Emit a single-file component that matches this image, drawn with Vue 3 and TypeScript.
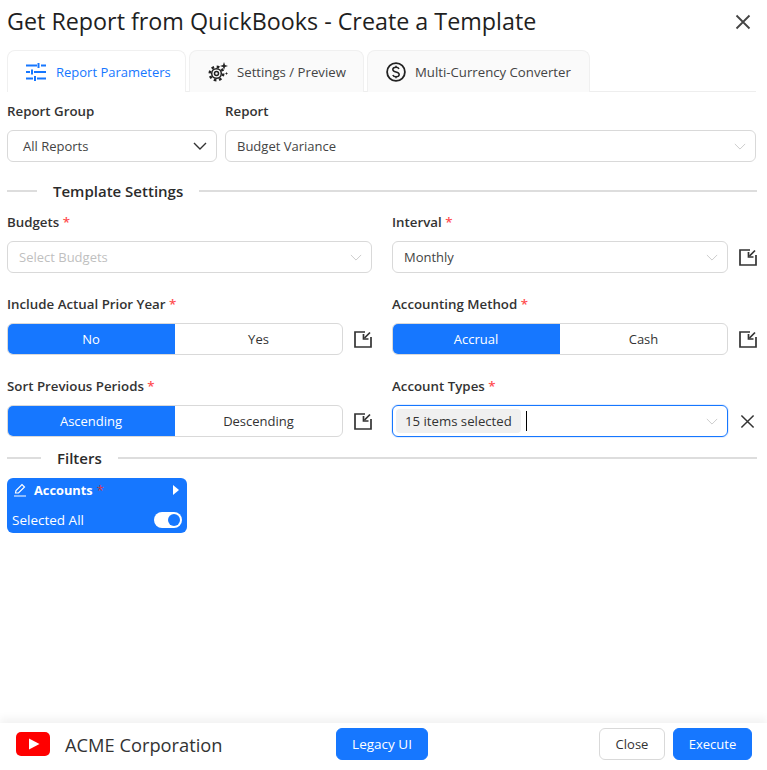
<template>
    <div class="dialog">
        <div class="body">
            <div class="title-row">
                <h1 class="title">Get Report from QuickBooks - Create a Template</h1>
                <svg class="close" viewBox="0 0 16 16"><path d="M1.500 1.500 14.500 14.500M14.500 1.500 1.500 14.500" /></svg>
            </div>

            <div class="tabs">
                <div class="tab active tab-1">
                    <svg class="tab-icon" viewBox="0 0 20 20">
                        <path d="M0 3.500H11M15 3.500H20M12.500 1V6M0 10H4M8 10H20M6 7.500V12.500M0 16.500H7M11 16.500H20M9 14V19" />
                    </svg>
                    <span>Report Parameters</span>
                </div>
                <div class="tab tab-2">
                    <svg class="tab-icon dark" viewBox="0 0 20 20">
                        <circle cx="8.500" cy="11.500" r="2" stroke-width="1.500" />
                        <circle cx="8.500" cy="11.500" r="4.800" stroke-width="1.500" />
                        <circle cx="8.500" cy="11.500" r="6.800" stroke-width="2.400" stroke-dasharray="2.700 2.640" />
                        <path class="spark" d="M16 0 17 3 20 4 17 5 16 8 15 5 12 4 15 3Z" />
                        <path class="spark" d="M18.500 10 19 11 20 11.500 19 12 18.500 13 18 12 17 11.500 18 11Z" />
                    </svg>
                    <span>Settings / Preview</span>
                </div>
                <div class="tab tab-3">
                    <svg class="tab-icon dark" viewBox="0 0 20 20">
                        <circle cx="10" cy="10" r="8.900" stroke-width="1.800" />
                        <path d="M13 7C12.500 5.800 11.300 5.200 10 5.200 8 5.200 6.800 6.200 6.800 7.500 6.800 11 13.200 9 13.200 12.500 13.200 13.900 12 14.800 10 14.800 8.500 14.800 7.300 14.200 6.800 13M10 3.700V5.200M10 14.800V16.300" stroke-width="1.500" />
                    </svg>
                    <span>Multi-Currency Converter</span>
                </div>
            </div>

            <div class="report-row">
                <div class="field">
                    <label class="label">Report Group</label>
                    <div class="select">
                        <span class="value">All Reports</span>
                        <svg class="chevron dark" viewBox="0 0 14 8"><path d="M1 1 7 7 13 1" /></svg>
                    </div>
                </div>
                <div class="field">
                    <label class="label">Report</label>
                    <div class="select narrow">
                        <span class="value">Budget Variance</span>
                        <svg class="chevron" viewBox="0 0 14 8"><path d="M1 1 7 7 13 1" /></svg>
                    </div>
                </div>
            </div>

            <div class="divider settings-divider">
                <span class="line line-settings"></span>
                <span class="divider-text">Template Settings</span>
                <span class="line grow"></span>
            </div>

            <div class="form-grid">
                <div class="field" v-for="item in fields" :key="item.label">
                    <label class="label">{{ item.label }} <span class="req">*</span></label>
                    <div class="control-row">
                        <div v-if="item.options" class="toggle">
                            <div class="opt on">{{ item.options[0] }}</div>
                            <div class="opt">{{ item.options[1] }}</div>
                        </div>
                        <div v-else-if="item.chip" class="select narrow focused">
                            <span class="chip">{{ item.chip }}</span>
                            <span class="caret"></span>
                            <svg class="chevron" viewBox="0 0 14 8"><path d="M1 1 7 7 13 1" /></svg>
                        </div>
                        <div v-else class="select narrow">
                            <span class="value" :class="{ placeholder: item.placeholder }">{{ item.placeholder || item.value }}</span>
                            <svg class="chevron" viewBox="0 0 14 8"><path d="M1 1 7 7 13 1" /></svg>
                        </div>
                        <svg v-if="item.chip" class="clear" viewBox="0 0 16 16"><path d="M1.500 1.500 14.500 14.500M14.500 1.500 1.500 14.500" /></svg>
                        <svg v-else-if="item.action" class="action" viewBox="0 0 18 18">
                            <path d="M11 2H1V17H17V7" />
                            <path d="M16 2.500 10.500 8" />
                            <path d="M9.500 4V9H14.500" />
                        </svg>
                    </div>
                </div>
            </div>

            <div class="divider filters-divider">
                <span class="line line-filters"></span>
                <span class="divider-text">Filters</span>
                <span class="line grow"></span>
            </div>

            <div class="filter-card">
                <div class="filter-head">
                    <svg class="pen" viewBox="0 0 14 14">
                        <path d="M1 13H13M2.500 10 3 7.500 9 1.500 11.500 4 5.500 10Z" />
                    </svg>
                    <span class="filter-name">Accounts</span>
                    <span class="req dark-req">*</span>
                    <span class="arrow"></span>
                </div>
                <div class="filter-foot">
                    <span>Selected All</span>
                    <span class="switch"><span class="knob"></span></span>
                </div>
            </div>
        </div>

        <div class="footer">
            <div class="brand">
                <svg class="logo" viewBox="0 0 34 24">
                    <rect width="34" height="24" rx="5" fill="#ff0000" />
                    <path d="M13 6.500 23.500 12 13 17.500Z" fill="#ffffff" />
                </svg>
                <span class="company">ACME Corporation</span>
            </div>
            <button class="btn primary legacy">Legacy UI</button>
            <div class="actions">
                <button class="btn plain">Close</button>
                <button class="btn primary">Execute</button>
            </div>
        </div>
    </div>
</template>

<script setup lang="ts">
    // 表单字段配置
    interface Ifield {
        label: string;
        value?: string;
        placeholder?: string;
        options?: [string, string];
        chip?: string;
        action?: boolean;
    }

    const fields: Array<Ifield> = [
        { label: 'Budgets', placeholder: 'Select Budgets' },
        { label: 'Interval', value: 'Monthly', action: true },
        { label: 'Include Actual Prior Year', options: ['No', 'Yes'], action: true },
        { label: 'Accounting Method', options: ['Accrual', 'Cash'], action: true },
        { label: 'Sort Previous Periods', options: ['Ascending', 'Descending'], action: true },
        { label: 'Account Types', chip: '15 items selected' }
    ]
</script>

<style>
    html, body {
        margin: 0;
        background-color: #ffffff;
    }
</style>

<style scoped>
    .dialog {
        width: 767px;
        height: 770px;
        display: flex;
        flex-direction: column;
        overflow: hidden;
        font-family: "Open Sans", "Noto Sans", sans-serif;
        font-size: 13px;
        color: #333333;
        background-color: #ffffff;
    }
    .body {
        flex: 1;
        padding: 0 10px 0 7px;
    }
    .title-row {
        height: 50px;
        display: flex;
        align-items: center;
        justify-content: space-between;
        padding-bottom: 6px;
        box-sizing: border-box;
    }
    .title {
        margin: 0;
        font-family: "Open Sans", sans-serif;
        font-size: 23.300px;
        font-weight: 400;
        color: #1f1f1f;
        margin-top: -2px;
    }
    .close {
        width: 16px;
        height: 16px;
        margin-right: 6px;
        fill: none;
        stroke: #444444;
        stroke-width: 1.800;
    }
    .tabs {
        height: 42px;
        width: 749px;
        display: flex;
        gap: 3px;
        box-sizing: border-box;
        border-bottom: 1px solid #eeeeee;
    }
    .tab {
        height: 42px;
        box-sizing: border-box;
        display: flex;
        align-items: center;
        border: 1px solid #f0f0f0;
        border-bottom: 0;
        border-radius: 8px 8px 0 0;
        background-color: #fafafa;
        color: #444444;
        font-size: 13.200px;
    }
    .tab.active {
        background-color: #ffffff;
        color: #1677ff;
        font-size: 13px;
    }
    .tab-1 {
        width: 179px;
        padding-left: 18px;
        gap: 10px;
    }
    .tab-2 {
        width: 175px;
        padding-left: 18px;
        gap: 9px;
    }
    .tab-3 {
        width: 223px;
        padding-left: 18px;
        gap: 9px;
    }
    .tab-icon {
        width: 20px;
        height: 20px;
        flex-shrink: 0;
        fill: none;
        stroke: #1677ff;
        stroke-width: 2;
    }
    .tab-icon.dark {
        stroke: #222222;
    }
    .spark {
        fill: #222222;
        stroke: none;
    }
    .report-row {
        display: grid;
        grid-template-columns: 210px 531px;
        gap: 8px;
        width: 749px;
        margin-top: 10px;
    }
    .field {
        display: flex;
        flex-direction: column;
        min-width: 0;
    }
    .label {
        height: 19px;
        margin-bottom: 9px;
        line-height: 19px;
        font-size: 13.300px;
        font-weight: 600;
        color: #333333;
        white-space: nowrap;
    }
    .req {
        color: #ff4d4f;
    }
    .select {
        height: 32px;
        flex: 0 0 32px;
        min-width: 0;
        box-sizing: border-box;
        display: flex;
        align-items: center;
        padding: 0 9px 0 15px;
        border: 1px solid #d9d9d9;
        border-radius: 6px;
        background-color: #ffffff;
    }
    .control-row .select {
        flex: 1;
    }
    .select.narrow {
        padding-left: 11px;
    }
    .select.focused {
        padding-left: 3px;
        border-color: #1677ff;
        box-shadow: 0 0 0 1px rgba(22, 119, 255, 0.12);
    }
    .value {
        flex: 1;
        color: #444444;
    }
    .placeholder {
        color: #bfbfbf;
    }
    .chevron {
        width: 12px;
        height: 7px;
        flex-shrink: 0;
        margin-left: auto;
        fill: none;
        stroke: #c4c4c4;
        stroke-width: 1;
    }
    .chevron.dark {
        width: 14px;
        height: 8px;
        stroke: #333333;
        stroke-width: 1.400;
    }
    .chip {
        height: 24px;
        line-height: 24px;
        padding: 0 9px;
        border-radius: 4px;
        background-color: #f0f0f0;
        color: #333333;
        white-space: nowrap;
        font-size: 13.200px;
    }
    .caret {
        width: 1px;
        height: 20px;
        margin-left: 5px;
        background-color: #000000;
    }
    .divider {
        display: flex;
        align-items: center;
        width: 750px;
        font-size: 15px;
        font-weight: 600;
        color: #2b2b2b;
    }
    .settings-divider {
        margin-top: 19px;
        height: 20px;
    }
    .filters-divider {
        margin-top: 11px;
        height: 20px;
    }
    .divider-text {
        padding: 0 16px;
    }
    .line {
        height: 2px;
        background-color: #dddddd;
    }
    .line.grow {
        flex: 1;
    }
    .line-settings {
        width: 30px;
    }
    .line-filters {
        width: 34px;
    }
    .form-grid {
        display: grid;
        grid-template-columns: 365px 365px;
        column-gap: 20px;
        row-gap: 22px;
        margin-top: 12px;
    }
    .control-row {
        height: 32px;
        display: flex;
        align-items: center;
    }
    .toggle {
        flex: 1;
        min-width: 0;
        height: 32px;
        display: grid;
        grid-template-columns: 1fr 1fr;
        box-sizing: border-box;
        border: 1px solid #d9d9d9;
        border-radius: 6px;
        overflow: hidden;
    }
    .opt {
        display: flex;
        align-items: center;
        justify-content: center;
        color: #333333;
    }
    .opt.on {
        margin: -1px 0 -1px -1px;
        background-color: #1677ff;
        color: #ffffff;
    }
    .action {
        width: 18px;
        height: 18px;
        margin-left: 11px;
        flex-shrink: 0;
        fill: none;
        stroke: #333333;
        stroke-width: 1.700;
    }
    .clear {
        width: 15px;
        height: 15px;
        margin-left: 12px;
        margin-right: 2px;
        flex-shrink: 0;
        fill: none;
        stroke: #333333;
        stroke-width: 1.600;
    }
    .filter-card {
        width: 180px;
        height: 55px;
        margin-top: 10px;
        box-sizing: border-box;
        padding: 0 5px;
        border-radius: 6px;
        background-color: #1677ff;
        color: #ffffff;
    }
    .filter-head {
        height: 24px;
        display: flex;
        align-items: center;
        padding-left: 1px;
    }
    .pen {
        width: 14px;
        height: 14px;
        margin-right: 7px;
        fill: none;
        stroke: #ffffff;
        stroke-width: 1.200;
    }
    .filter-name {
        font-weight: 700;
        font-size: 12.800px;
    }
    .dark-req {
        margin-left: 4px;
        color: #d9363e;
    }
    .arrow {
        width: 0;
        height: 0;
        margin-left: auto;
        margin-right: 3px;
        border-left: 6px solid #ffffff;
        border-top: 5px solid transparent;
        border-bottom: 5px solid transparent;
    }
    .filter-foot {
        height: 27px;
        margin-top: 4px;
        display: flex;
        align-items: center;
        justify-content: space-between;
        font-size: 13.500px;
    }
    .switch {
        width: 28px;
        height: 16px;
        display: flex;
        align-items: center;
        justify-content: flex-end;
        padding-right: 2px;
        box-sizing: border-box;
        border-radius: 8px;
        background-color: #ffffff;
    }
    .knob {
        width: 12px;
        height: 12px;
        border-radius: 50%;
        background-color: #1677ff;
    }
    .footer {
        height: 47px;
        flex-shrink: 0;
        display: grid;
        grid-template-columns: 1fr auto 1fr;
        align-items: start;
        box-sizing: border-box;
        padding: 5px 15px 0 16px;
        box-shadow: 0 -5px 8px rgba(0, 0, 0, 0.05);
        background-color: #ffffff;
    }
    .brand {
        height: 32px;
        display: flex;
        align-items: center;
        gap: 15px;
    }
    .logo {
        width: 34px;
        height: 24px;
    }
    .company {
        font-size: 18.300px;
        color: #333333;
    }
    .actions {
        display: flex;
        justify-content: flex-end;
        gap: 8px;
    }
    .btn {
        height: 32px;
        box-sizing: border-box;
        border: 1px solid #d9d9d9;
        border-radius: 6px;
        font-family: inherit;
        font-size: 13px;
        cursor: pointer;
    }
    .btn.primary {
        width: 79px;
        border-color: #1677ff;
        background-color: #1677ff;
        color: #ffffff;
    }
    .btn.legacy {
        width: 92px;
        margin-left: -4px;
        font-size: 13.500px;
    }
    .btn.plain {
        width: 66px;
        background-color: #ffffff;
        color: #333333;
    }
</style>
